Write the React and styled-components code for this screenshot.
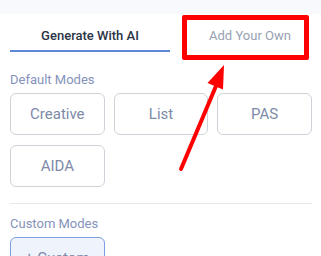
import React from 'react';
import styled, { createGlobalStyle } from 'styled-components';

const modes = ['Creative', 'List', 'PAS', 'AIDA'];

const App = () => (
    <>
        <GlobalStyle />
        <Page>
            <TopStrip />
            <Tabs>
                <Tab active>Generate With AI</Tab>
                <Tab>Add Your Own</Tab>
            </Tabs>
            <Section>
                <Label>Default Modes</Label>
                <ModeGrid>
                    {modes.map(m => <ModeButton key={m}>{m}</ModeButton>)}
                </ModeGrid>
                <Divider />
                <Label>Custom Modes</Label>
                <ModeGrid>
                    <ModeButton custom>+ Custom</ModeButton>
                </ModeGrid>
            </Section>
            <HighlightBox />
            <Arrow width="321" height="256" viewBox="0 0 321 256">
                <line x1="181" y1="169" x2="216" y2="86" stroke="#ff0000" strokeWidth="4" strokeLinecap="round" />
                <polygon points="224,65 207.5,83 223,89.5" fill="#ff0000" />
            </Arrow>
        </Page>
    </>
);

const GlobalStyle = createGlobalStyle`
    html, body {
        margin: 0;
        padding: 0;
        background: #ffffff;
        overflow: hidden;
    }
    body {
        font-family: Roboto, "Liberation Sans", sans-serif;
    }
`;

const Page = styled.div`
    position: relative;
    width: 321px;
    height: 256px;
    overflow: hidden;
    background: #ffffff;
`;

const TopStrip = styled.div`
    height: 14px;
    background: #f8f9fc;
`;

const Tabs = styled.div`
    display: flex;
    width: 320px;
    margin: 7px 0 0 10px;
`;

const Tab = styled.div`
    flex: 0 0 160px;
    height: 29px;
    display: flex;
    align-items: center;
    justify-content: center;
    font-size: 13px;
    font-weight: ${p => (p.active ? 500 : 400)};
    color: ${p => (p.active ? '#2b3445' : '#98a1b3')};
    border-bottom: 2px solid ${p => (p.active ? '#5d87d8' : 'transparent')};
`;

const Section = styled.div`
    padding: 20px 9px 0 10px;
`;

const Label = styled.div`
    font-size: 13px;
    line-height: 16px;
    color: #8593bb;
    margin-bottom: 5px;
`;

const ModeGrid = styled.div`
    display: grid;
    grid-template-columns: repeat(3, 1fr);
    column-gap: 9px;
    row-gap: 10px;
`;

const ModeButton = styled.div`
    height: 42px;
    box-sizing: border-box;
    display: flex;
    align-items: center;
    justify-content: center;
    border-radius: 6px;
    font-size: 15px;
    color: #7d8aa8;
    border: 1px solid ${p => (p.custom ? '#7ca0df' : '#cfd2d8')};
    background: ${p => (p.custom ? '#eef3fc' : '#ffffff')};
`;

const Divider = styled.div`
    height: 1px;
    background: #e5e8ef;
    margin: 16px 0 12px;
`;

const HighlightBox = styled.div`
    position: absolute;
    left: 182px;
    top: 15px;
    width: 127px;
    height: 45px;
    box-sizing: border-box;
    border: 5px solid #ff0000;
    border-radius: 2px;
`;

const Arrow = styled.svg`
    position: absolute;
    left: 0;
    top: 0;
    pointer-events: none;
`;

export default App;
